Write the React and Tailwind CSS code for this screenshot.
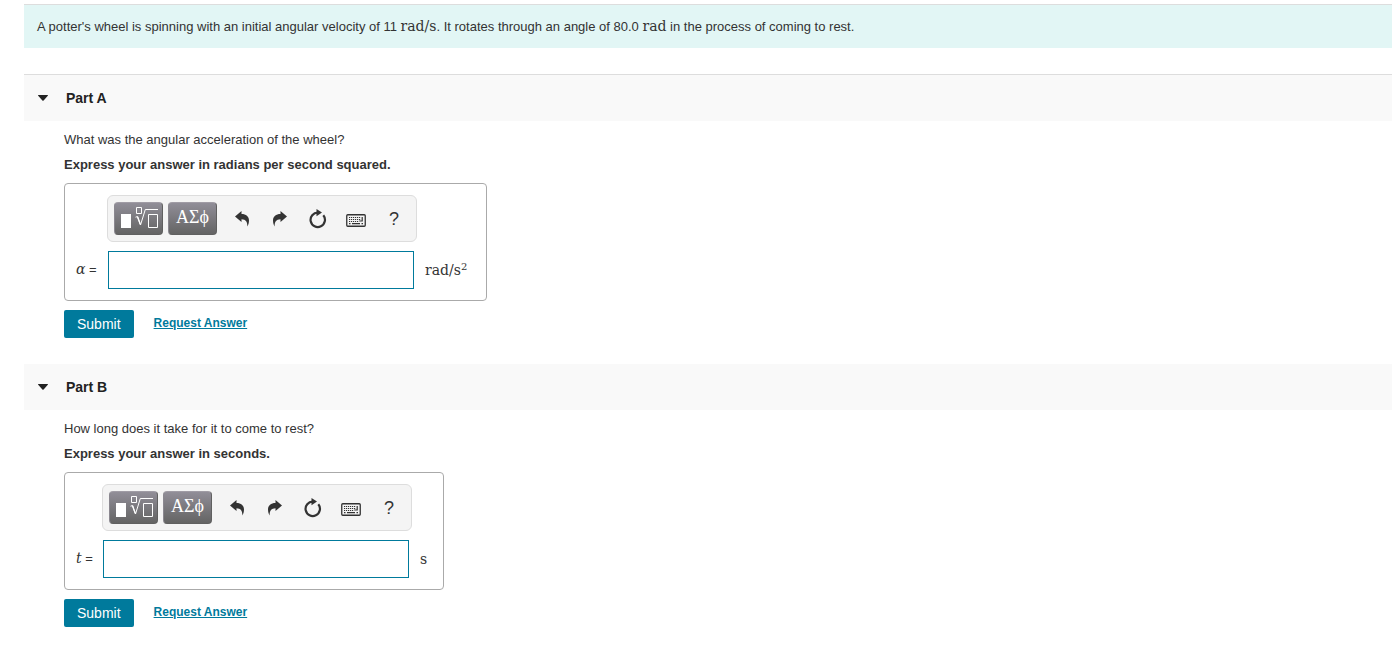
import { useState } from "react";

const serifClass = "font-['DejaVu_Serif',serif] text-sm leading-none";
const gradientButtonClass = "flex h-[33px] w-[49px] shrink-0 items-center justify-center rounded border border-t-[#a09ca5] border-l-[#8b8890] border-r-[#606060] border-b-[#606060] bg-linear-to-b from-[#918e98] to-[#646464] text-white";
const toolButtonClass = "flex h-[33px] w-[38px] shrink-0 items-center justify-center text-[#333]";

const parts = [
  {
    id: "a",
    title: "Part A",
    headerClass: "border-t border-[#ddd]",
    question: "What was the angular acceleration of the wheel?",
    hint: "Express your answer in radians per second squared.",
    symbol: "α",
    labelClass: "w-[31px]",
    boxClass: "pr-[19px]",
    unit: <>rad/s<sup className="text-[10px]">2</sup></>
  },
  {
    id: "b",
    title: "Part B",
    headerClass: "",
    question: "How long does it take for it to come to rest?",
    hint: "Express your answer in seconds.",
    symbol: "t",
    labelClass: "w-[26px]",
    boxClass: "pr-4",
    unit: "s"
  }
];

function TemplateIcon() {
  return (
    <svg width="38" height="26" viewBox="0 0 38 26" fill="none" stroke="currentColor" aria-hidden="true">
      <rect x="1" y="8" width="10" height="14" fill="currentColor" stroke="none" />
      <path d="M16.500 1.500h5v6h-5z" />
      <path d="M15.500 11.200l2-.7 3 8.500L25.300 3.500H38" />
      <path d="M17.500 10.800l2.800 7.500" strokeWidth="1.300" />
      <path d="M28.500 8.500h9v13h-9z" />
    </svg>
  );
}

function UndoIcon({ className = "" }) {
  return (
    <svg width="14" height="16" viewBox="0 0 14 16" fill="currentColor" className={className} aria-hidden="true">
      <path d="M0 5.500L6.500 0v3C11 3 14 5.500 14 9.500c0 2.500-.8 4.500-1.700 6 .2-4.500-1.300-7-5.800-7.200V11z" />
    </svg>
  );
}

function ResetIcon() {
  return (
    <svg width="18" height="20" viewBox="0 0 18 20" aria-hidden="true">
      <path d="M14.300 6.200A7.200 7.200 0 1 1 9 3.600" fill="none" stroke="currentColor" strokeWidth="2.200" />
      <path d="M7.500 0L13 3.500 7.500 7.300z" fill="currentColor" />
    </svg>
  );
}

function KeyboardIcon() {
  return (
    <svg width="20" height="17" viewBox="0 0 20 17" fill="none" stroke="currentColor" aria-hidden="true">
      <rect x=".75" y="4.750" width="18.500" height="11.500" rx="1" strokeWidth="1.300" />
      <path d="M3 7.500h12M3 9.500h12M3 11.500h10" strokeDasharray="1.200 .8" />
      <path d="M16.200 7v4h-3M3 13.700h1.500M6 13.700h8M15.500 13.700H17" strokeWidth="1.200" />
    </svg>
  );
}

function Toolbar() {
  return (
    <div className="flex w-[310px] gap-[5px] rounded-md border border-[#ddd] bg-[#f4f4f4] p-1.5">
      <button type="button" aria-label="Templates" className={gradientButtonClass}>
        <TemplateIcon />
      </button>
      <button type="button" aria-label="Symbols" className={gradientButtonClass}>
        <span className="pb-1 font-['Liberation_Serif',serif] text-lg leading-none">ΑΣϕ</span>
      </button>
      <div className="ml-px flex">
        <button type="button" aria-label="Undo" className={toolButtonClass}>
          <UndoIcon />
        </button>
        <button type="button" aria-label="Redo" className={toolButtonClass}>
          <UndoIcon className="-scale-x-100" />
        </button>
        <button type="button" aria-label="Reset" className={toolButtonClass}>
          <ResetIcon />
        </button>
        <button type="button" aria-label="Keyboard shortcuts" className={toolButtonClass}>
          <KeyboardIcon />
        </button>
        <button type="button" aria-label="Help" className={`${toolButtonClass} text-lg leading-none`}>
          ?
        </button>
      </div>
    </div>
  );
}

function Part({ part }) {
  const [open, setOpen] = useState(true);
  const [answer, setAnswer] = useState("");
  const inputId = `answer-${part.id}`;

  return (
    <section className="mb-[26px]">
      <h2 className={`bg-[#f9f9f9] ${part.headerClass}`}>
        <button
          type="button"
          aria-expanded={open}
          onClick={() => setOpen(!open)}
          className="flex h-[46px] w-full items-center gap-[18px] px-3.5 text-sm font-bold text-[#222]"
        >
          <svg width="10" height="6" viewBox="0 0 10 6" fill="currentColor" className={open ? "" : "-rotate-90"} aria-hidden="true">
            <path d="M.5 0h9q.8 0 .3.700L5.600 5.500q-.6.600-1.200 0L.2.700Q-.3 0 .5 0z" />
          </svg>
          {part.title}
        </button>
      </h2>
      {open ? (
        <form className="px-10 pt-1.5" onSubmit={(event) => event.preventDefault()}>
          <p className="leading-[25px]">{part.question}</p>
          <p className="leading-[25px] font-bold">{part.hint}</p>
          <div className={`mt-1.5 flex w-fit flex-col gap-[9px] rounded border border-[#aaa] py-[11px] pl-[11px] ${part.boxClass}`}>
            <div className="flex">
              <div className={`shrink-0 ${part.labelClass}`} />
              <Toolbar />
            </div>
            <div className="flex items-center">
              <label htmlFor={inputId} className={`shrink-0 whitespace-nowrap ${part.labelClass}`}>
                <i className={serifClass}>{part.symbol}</i> =
              </label>
              <input
                id={inputId}
                value={answer}
                onChange={(event) => setAnswer(event.target.value)}
                className="mr-[11px] ml-px h-[38px] w-[306px] border border-[#007a9c] bg-white px-2 text-base outline-none"
              />
              <span className={serifClass}>{part.unit}</span>
            </div>
          </div>
          <div className="mt-[9px] flex items-center gap-5">
            <button type="submit" className="h-7 rounded-xs bg-[#007a9c] px-[13px] text-sm text-white">
              Submit
            </button>
            <a href="#" className="pb-0.5 text-xs font-bold text-[#007a9c] underline">
              Request Answer
            </a>
          </div>
        </form>
      ) : null}
    </section>
  );
}

export default function App() {
  return (
    <main className="bg-white pt-1 pl-6 font-['Liberation_Sans',sans-serif] text-[13px] text-[#333]">
      <div className="mb-[26px] border-t border-[#ddd] bg-[#e2f6f5] px-[13px] py-[11px] leading-[21px]">
        A potter's wheel is spinning with an initial angular velocity of 11 <span className={serifClass}>rad/s</span>. It rotates through an angle of 80.0 <span className={serifClass}>rad</span> in the process of coming to rest.
      </div>
      {parts.map((part) => (
        <Part key={part.id} part={part} />
      ))}
    </main>
  );
}
